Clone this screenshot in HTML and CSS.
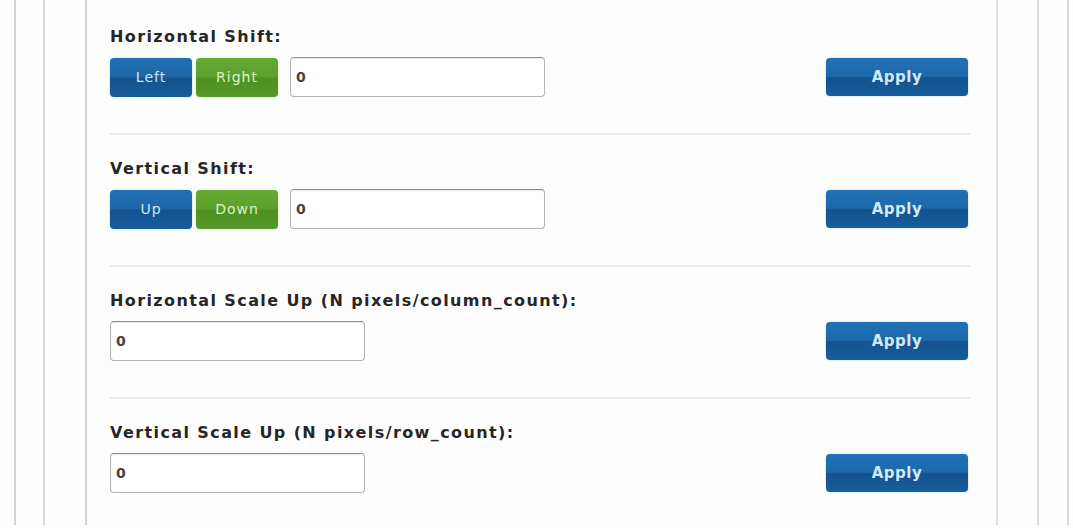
FILE: index.html
```html
<!DOCTYPE html>
<html>
<head>
<meta charset="utf-8">
<link rel="stylesheet" href="styles.css">
</head>
<body>
<div class="frame-outer">
  <div class="frame-inner">
    <div class="panel">
      <section class="section">
        <div class="label">Horizontal Shift:</div>
        <div class="row">
          <div class="controls">
            <button class="btn btn-blue">Left</button>
            <button class="btn btn-green">Right</button>
            <input class="field" type="text" value="0">
          </div>
          <button class="apply">Apply</button>
        </div>
      </section>
      <section class="section">
        <div class="label">Vertical Shift:</div>
        <div class="row">
          <div class="controls">
            <button class="btn btn-blue">Up</button>
            <button class="btn btn-green">Down</button>
            <input class="field" type="text" value="0">
          </div>
          <button class="apply">Apply</button>
        </div>
      </section>
      <section class="section">
        <div class="label">Horizontal Scale Up (N pixels/column_count):</div>
        <div class="row">
          <div class="controls">
            <input class="field field-solo" type="text" value="0">
          </div>
          <button class="apply">Apply</button>
        </div>
      </section>
      <section class="section last">
        <div class="label">Vertical Scale Up (N pixels/row_count):</div>
        <div class="row">
          <div class="controls">
            <input class="field field-solo" type="text" value="0">
          </div>
          <button class="apply">Apply</button>
        </div>
      </section>
    </div>
  </div>
</div>
</body>
</html>
```

FILE: styles.css
```css
html, body {
  margin: 0;
  padding: 0;
  background: #fefefe;
  font-family: "DejaVu Sans", Verdana, sans-serif;
}

body {
  height: 528px;
  overflow: hidden;
}

.frame-outer {
  margin: 0 4px 0 14px;
  height: 525px;
  box-sizing: border-box;
  border-left: 2px solid #d4d4d4;
  border-right: 2px solid #d8d8d8;
  padding: 0 28px 0 27px;
}

.frame-inner {
  height: 100%;
  box-sizing: border-box;
  border-left: 2px solid #d8d8d8;
  border-right: 2px solid #dcdcdc;
  padding: 0 39px 0 40px;
}

.panel {
  height: 100%;
  box-sizing: border-box;
  border-left: 2px solid #d2d2d2;
  border-right: 2px solid #e0e0e0;
  padding: 3px 26px 0 23px;
  background: #fdfdfd;
}

.section {
  padding: 24px 0 36px;
  border-bottom: 2px solid #ebebeb;
}

.section.last {
  border-bottom: none;
}

.label {
  font-size: 16px;
  line-height: 19px;
  font-weight: bold;
  letter-spacing: 1.4px;
  color: #262626;
  margin-bottom: 11px;
}

.row {
  display: flex;
  align-items: center;
  justify-content: space-between;
  height: 40px;
}

.controls {
  display: flex;
  align-items: center;
  gap: 4px;
}

.btn {
  width: 82px;
  height: 39px;
  border: none;
  border-radius: 4px;
  font-family: "DejaVu Sans", Verdana, sans-serif;
  font-size: 14px;
  letter-spacing: 1px;
  padding: 0;
  cursor: pointer;
}

.btn-blue {
  color: #d0e4f6;
  background: linear-gradient(#2270b4 0%, #1c66a8 48%, #14548f 52%, #175c9b 100%);
  box-shadow: 0 0 2px #a8dcf4;
}

.btn-green {
  color: #dff2c4;
  background: linear-gradient(#66a934 0%, #5ca02c 48%, #4e9022 52%, #579a28 100%);
  box-shadow: 0 0 2px #c8f0a0;
}

.field {
  width: 255px;
  height: 40px;
  box-sizing: border-box;
  margin-left: 8px;
  border: 1px solid #b4b4b4;
  border-top-color: #8c8c8c;
  border-radius: 4px;
  padding: 0 0 0 5px;
  font-family: "DejaVu Sans", Verdana, sans-serif;
  font-size: 14px;
  font-weight: bold;
  color: #444;
  background: #fff;
  box-shadow: inset 0 1px 1px rgba(0, 0, 0, 0.08);
}

.field-solo {
  margin-left: 0;
}

.apply {
  width: 142px;
  height: 38px;
  margin-right: 2px;
  border: none;
  border-radius: 4px;
  font-family: "DejaVu Sans", Verdana, sans-serif;
  font-size: 15px;
  font-weight: bold;
  letter-spacing: 0.5px;
  color: #d4e8fa;
  background: linear-gradient(#2272b6 0%, #1c68ab 48%, #13528e 52%, #185d9d 100%);
  box-shadow: 0 0 2px #a8dcf4;
  padding: 0;
}
```
